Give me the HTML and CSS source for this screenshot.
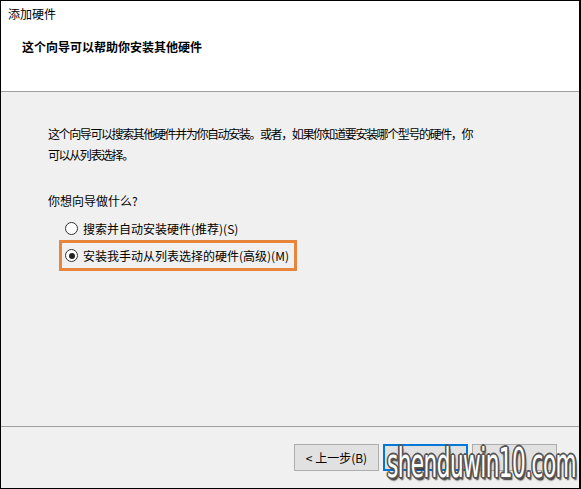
FILE: index.html
```html
<!DOCTYPE html>
<html lang="zh-CN">
<head>
<meta charset="utf-8">
<link rel="stylesheet" href="styles.css">
</head>
<body>
<div class="window">
  <div class="header">
    <div class="title">添加硬件</div>
    <div class="heading">这个向导可以帮助你安装其他硬件</div>
  </div>
  <div class="content">
    <p class="intro">这个向导可以搜索其他硬件并为你自动安装。或者，如果你知道要安装哪个型号的硬件，你可以从列表选择。</p>
    <p class="question">你想向导做什么?</p>
    <div class="options">
      <label class="option"><span class="radio"></span>搜索并自动安装硬件(推荐)(S)</label>
      <label class="option selected"><span class="radio checked"></span>安装我手动从列表选择的硬件(高级)(M)</label>
    </div>
  </div>
  <div class="footer">
    <button class="btn">&lt; 上一步(B)</button>
    <button class="btn primary"><span class="hidden-label">下一页(N)</span></button>
    <button class="btn"><span class="hidden-label">取消</span></button>
    <div class="watermark">shenduwin10.com</div>
  </div>
</div>
</body>
</html>
```
FILE: styles.css
```css
html, body {
  margin: 0;
  padding: 0;
  background: #ffffff;
}
body {
  font-family: "Noto Sans CJK SC", "Noto Sans", sans-serif;
  font-size: 12px;
  color: #000;
}
.window {
  width: 578px;
  height: 487px;
  border-top: 1px solid #000;
  border-left: 1px solid #000;
  border-right: 2px solid #000;
  border-bottom: 1px solid #000;
  display: flex;
  flex-direction: column;
  background: #f0f0f0;
}
.header {
  background: #fff;
  height: 91px;
  border-bottom: 1px solid #a0a0a0;
  padding: 4px 0 0 7px;
  box-sizing: border-box;
}
.title {
  line-height: 18px;
}
.heading {
  font-weight: bold;
  margin: 15px 0 0 14px;
  line-height: 18px;
}
.content {
  flex: 1;
  padding: 31px 0 0 47px;
}
.intro {
  margin: 0;
  width: 430px;
  line-height: 21px;
  letter-spacing: -1.4px;
}
.question {
  margin: 27px 0 0 0;
  line-height: 18px;
}
.options {
  margin-top: 6px;
  margin-left: 12px;
  display: flex;
  flex-direction: column;
  gap: 0;
}
.option {
  display: flex;
  align-items: center;
  gap: 5px;
  height: 24px;
  padding-left: 5px;
  width: 232px;
  box-sizing: border-box;
}
.option.selected {
  height: 31px;
  border: 3px solid #e8853d;
  width: 238px;
  margin-left: -1px;
  padding-left: 3px;
}
.radio {
  width: 11px;
  height: 11px;
  border: 1px solid #333;
  border-radius: 50%;
  background: #fff;
  position: relative;
  flex: none;
}
.radio.checked::after {
  content: "";
  position: absolute;
  left: 2.5px;
  top: 2.5px;
  width: 6px;
  height: 6px;
  border-radius: 50%;
  background: #222;
}
.footer {
  height: 61px;
  border-top: 1px solid #a0a0a0;
  display: flex;
  align-items: center;
  justify-content: flex-end;
  gap: 4px;
  padding-right: 22px;
  position: relative;
}
.btn {
  font-family: inherit;
  font-size: 12px;
  width: 85px;
  height: 27px;
  background: #e1e1e1;
  border: 1px solid #adadad;
  padding: 0;
  color: #000;
}
.btn.primary {
  border: 2px solid #0078d7;
}
.hidden-label {
  visibility: hidden;
}
.watermark {
  position: absolute;
  left: 386px;
  top: 14px;
  width: 340px;
  transform: scaleX(0.54);
  transform-origin: 0 0;
  font-family: "DejaVu Sans", sans-serif;
  font-size: 40px;
  line-height: 44px;
  color: #fff;
  letter-spacing: -1px;
  white-space: nowrap;
  text-shadow: -2px -1px 0 #555, 2px -1px 0 #555, -2px 1px 0 #555, 2px 1px 0 #555, 0 2px 0 #555, 0 -2px 0 #555, 3px 0 0 #555, -3px 0 0 #555, 3px 3px 2px #333;
}
```
